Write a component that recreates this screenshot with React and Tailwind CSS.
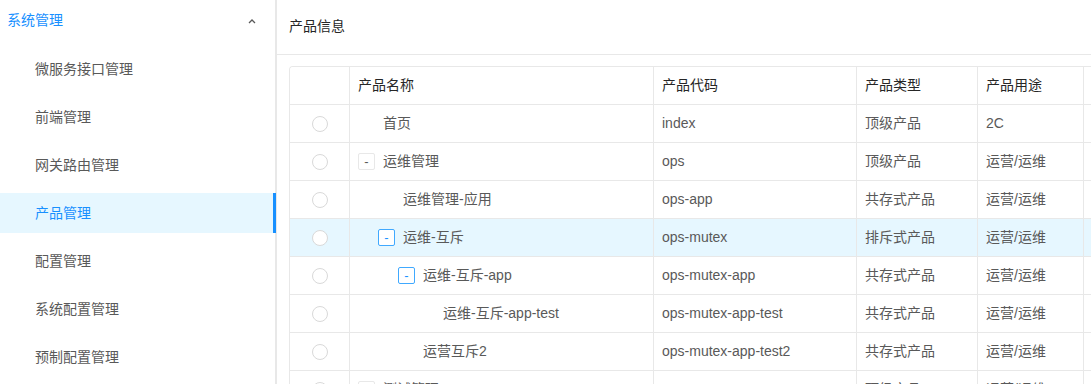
import React from 'react';

const menuItems = ['微服务接口管理', '前端管理', '网关路由管理', '产品管理', '配置管理', '系统配置管理', '预制配置管理'];

const rows = [
  { name: '首页', code: 'index', type: '顶级产品', usage: '2C', level: 0, expand: false },
  { name: '运维管理', code: 'ops', type: '顶级产品', usage: '运营/运维', level: 0, expand: 'gray' },
  { name: '运维管理-应用', code: 'ops-app', type: '共存式产品', usage: '运营/运维', level: 1, expand: false },
  { name: '运维-互斥', code: 'ops-mutex', type: '排斥式产品', usage: '运营/运维', level: 1, expand: 'blue', active: true },
  { name: '运维-互斥-app', code: 'ops-mutex-app', type: '共存式产品', usage: '运营/运维', level: 2, expand: 'blue' },
  { name: '运维-互斥-app-test', code: 'ops-mutex-app-test', type: '共存式产品', usage: '运营/运维', level: 3, expand: false },
  { name: '运营互斥2', code: 'ops-mutex-app-test2', type: '共存式产品', usage: '运营/运维', level: 2, expand: false },
  { name: '测试管理', code: 'ops-user', type: '顶级产品', usage: '运营/运维', level: 0, expand: 'gray' },
];

const Sidebar = () => (
  <div className="w-[277px] shrink-0 h-full bg-white border-r-2 border-[#e8e8e8] relative">
    <div className="h-10 flex items-center justify-between pl-[7px] pr-[19px] text-[#1890ff]">
      <span>系统管理</span>
      <svg width="8" height="5" viewBox="0 0 8 5" className="mt-[2px]">
        <polyline points="1,4 4,1 7,4" fill="none" stroke="#595959" strokeWidth="1.3" />
      </svg>
    </div>
    <div className="pt-[9px] flex flex-col gap-2">
      {menuItems.map((item) => {
        const active = item === '产品管理';
        return (
          <div
            key={item}
            className={`relative h-10 flex items-center pl-[35px] ${active ? 'bg-[#e6f7ff] text-[#1890ff]' : 'text-[#595959]'}`}
          >
            {item}
            {active && <div className="absolute right-[-1px] top-0 bottom-0 w-[3px] bg-[#1890ff]" />}
          </div>
        );
      })}
    </div>
  </div>
);

const Radio = () => (
  <span className="w-4 h-4 rounded-full border border-[#d9d9d9] bg-white inline-block" />
);

const ExpandIcon = ({ color }) => (
  <span
    className={`w-[17px] h-[17px] mr-2 shrink-0 rounded-[2px] border bg-white flex items-center justify-center text-[13px] leading-none ${
      color === 'blue' ? 'border-[#40a9ff] text-[#1890ff]' : 'border-[#e8e8e8] text-[#595959]'
    }`}
  >
    -
  </span>
);

const Row = ({ row }) => (
  <div className={`flex h-[38px] ${row.active ? 'bg-[#e6f7ff]' : 'bg-white'}`}>
    <div className="w-[60px] shrink-0 border-r border-b border-[#e8e8e8] flex items-center justify-center">
      <Radio />
    </div>
    <div className="w-[304px] shrink-0 border-r border-b border-[#e8e8e8] flex items-center px-2">
      <span className="shrink-0" style={{ width: row.level * 20 }} />
      {row.expand ? <ExpandIcon color={row.expand} /> : <span className="w-[25px] shrink-0" />}
      <span>{row.name}</span>
    </div>
    <div className="w-[203px] shrink-0 border-r border-b border-[#e8e8e8] flex items-center px-2">{row.code}</div>
    <div className="w-[121px] shrink-0 border-r border-b border-[#e8e8e8] flex items-center px-2">{row.type}</div>
    <div className="w-[106px] shrink-0 border-r border-b border-[#e8e8e8] flex items-center px-2">{row.usage}</div>
    <div className="w-[150px] shrink-0 border-r border-b border-[#e8e8e8]" />
  </div>
);

export default function App() {
  return (
    <div
      className="w-[1091px] h-[384px] flex bg-white overflow-hidden text-[14px] text-[#595959]"
      style={{ fontFamily: '"Liberation Sans", "Noto Sans CJK SC", sans-serif' }}
    >
      <Sidebar />
      <div className="flex-1 min-w-0 overflow-hidden">
        <div className="h-[55px] border-b border-[#e8e8e8] flex items-center pl-3 pb-[2px] text-[#262626]">产品信息</div>
        <div className="mt-[11px] ml-3 w-[1000px] border-l border-t border-[#e8e8e8] rounded-tl-[4px] overflow-hidden">
          <div className="flex h-[38px] bg-white text-[#262626]">
            <div className="w-[60px] shrink-0 border-r border-b border-[#e8e8e8]" />
            <div className="w-[304px] shrink-0 border-r border-b border-[#e8e8e8] flex items-center px-2">产品名称</div>
            <div className="w-[203px] shrink-0 border-r border-b border-[#e8e8e8] flex items-center px-2">产品代码</div>
            <div className="w-[121px] shrink-0 border-r border-b border-[#e8e8e8] flex items-center px-2">产品类型</div>
            <div className="w-[106px] shrink-0 border-r border-b border-[#e8e8e8] flex items-center px-2">产品用途</div>
            <div className="w-[150px] shrink-0 border-r border-b border-[#e8e8e8]" />
          </div>
          {rows.map((row) => (
            <Row key={row.code} row={row} />
          ))}
        </div>
      </div>
    </div>
  );
}
